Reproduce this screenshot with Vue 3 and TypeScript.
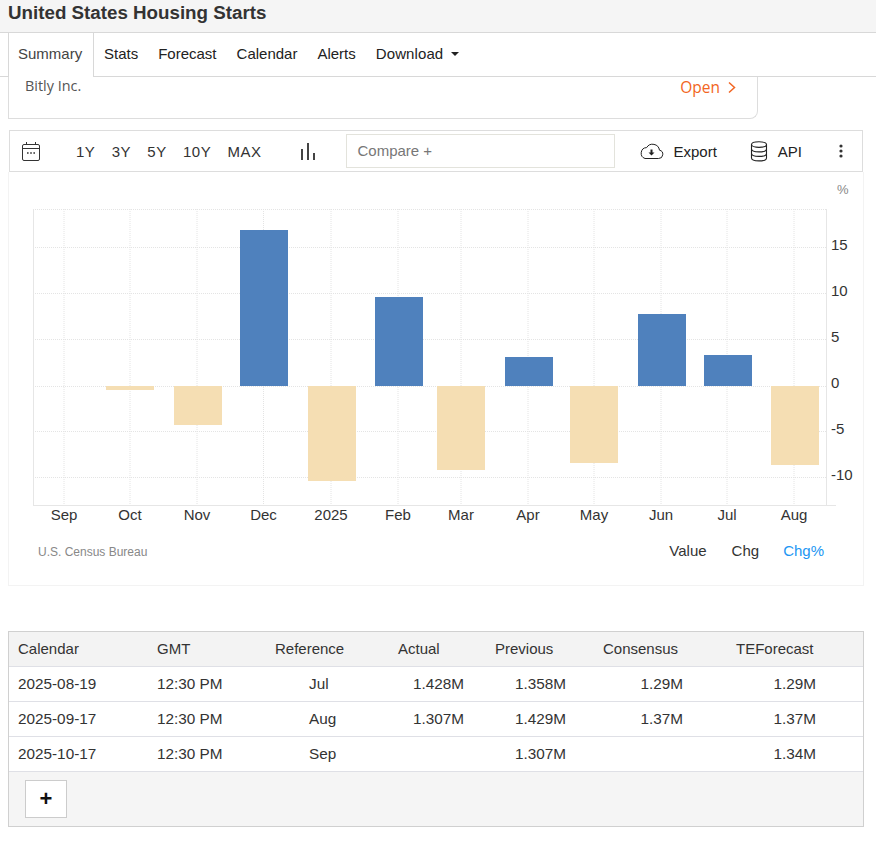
<script setup lang="ts">
const ranges = ['1Y', '3Y', '5Y', '10Y', 'MAX']
const tabs = ['Stats', 'Forecast', 'Calendar', 'Alerts']
const months = [
  { t: 'Sep', x: 64 }, { t: 'Oct', x: 130 }, { t: 'Nov', x: 197 }, { t: 'Dec', x: 263.5 },
  { t: '2025', x: 331 }, { t: 'Feb', x: 398 }, { t: 'Mar', x: 461 }, { t: 'Apr', x: 528 },
  { t: 'May', x: 594 }, { t: 'Jun', x: 661 }, { t: 'Jul', x: 727 }, { t: 'Aug', x: 794 },
]
const hLines = [209, 247, 293, 339, 431, 477]
const yLabels = [
  { t: '15', y: 250 }, { t: '10', y: 296 }, { t: '5', y: 342 },
  { t: '0', y: 388 }, { t: '-5', y: 434 }, { t: '-10', y: 480 },
]
const bars = [
  { x: 106, y: 386, h: 4, up: false }, { x: 174, y: 386, h: 39, up: false },
  { x: 240, y: 230, h: 156, up: true }, { x: 308, y: 386, h: 95, up: false },
  { x: 375, y: 297, h: 89, up: true }, { x: 437, y: 386, h: 84, up: false },
  { x: 505, y: 357, h: 29, up: true }, { x: 570, y: 386, h: 77, up: false },
  { x: 638, y: 314, h: 72, up: true }, { x: 704, y: 355, h: 31, up: true },
  { x: 771, y: 386, h: 79, up: false },
]
const rows = [
  ['2025-08-19', '12:30 PM', 'Jul', '1.428M', '1.358M', '1.29M', '1.29M'],
  ['2025-09-17', '12:30 PM', 'Aug', '1.307M', '1.429M', '1.37M', '1.37M'],
  ['2025-10-17', '12:30 PM', 'Sep', '', '1.307M', '', '1.34M'],
]
const heads = ['Calendar', 'GMT', 'Reference', 'Actual', 'Previous', 'Consensus', 'TEForecast']
</script>

<template>
  <div class="page">
    <header class="title"><h1>United States Housing Starts</h1></header>

    <nav class="tabs">
      <a class="tab active">Summary</a>
      <a v-for="t in tabs" :key="t" class="tab">{{ t }}</a>
      <a class="tab download">Download <span class="caret"></span></a>
    </nav>

    <div class="ad">
      <span class="ad-name">Bitly Inc.</span>
      <span class="ad-open">Open
        <svg width="10" height="13" viewBox="0 0 10 13"><path d="M2 1.5 L7.5 6.5 L2 11.5" fill="none" stroke="#f26522" stroke-width="1.5"/></svg>
      </span>
    </div>

    <div class="toolbar">
      <svg class="cal" width="20" height="21" viewBox="0 0 20 21" fill="none" stroke="#333" stroke-width="1">
        <rect x="1.5" y="3.5" width="17" height="16" rx="1.5"/>
        <path d="M1.5 7.5 H18.5 M5.5 1 V3.5 M14.5 1 V3.5"/>
        <path d="M6 12 H7.6 M9.2 12 H10.8 M12.4 12 H14" stroke-width="1.4"/>
      </svg>
      <div class="ranges">
        <span v-for="r in ranges" :key="r">{{ r }}</span>
      </div>
      <svg class="barsicon" width="16" height="18" viewBox="0 0 16 18" fill="#444">
        <rect x="1" y="7" width="2" height="11"/>
        <rect x="7" y="1" width="2" height="17"/>
        <rect x="13" y="11" width="2" height="7"/>
      </svg>
      <div class="compare">Compare +</div>
      <div class="action export">
        <svg width="25" height="18" viewBox="0 0 25 18" fill="none" stroke="#222" stroke-width="1">
          <path d="M6 16.5 H19.5 A4.2 4.2 0 0 0 20.5 8.2 A7 7 0 0 0 7.6 5.6 A5.6 5.6 0 0 0 6 16.5 Z"/>
          <path d="M12.5 7.5 V11" stroke-width="2"/>
          <path d="M9.5 10.5 H15.5 L12.5 13.5 Z" fill="#222" stroke="none"/>
        </svg>
        <span>Export</span>
      </div>
      <div class="action api">
        <svg width="18" height="21" viewBox="0 0 18 21" fill="none" stroke="#222" stroke-width="1.1">
          <ellipse cx="9" cy="3.6" rx="7.5" ry="2.8"/>
          <path d="M1.5 3.6 V17 C1.5 18.7 5 19.9 9 19.9 C13 19.9 16.5 18.7 16.5 17 V3.6"/>
          <path d="M1.5 8 C1.5 9.7 5 10.9 9 10.9 C13 10.9 16.5 9.7 16.5 8"/>
          <path d="M1.5 12.5 C1.5 14.2 5 15.4 9 15.4 C13 15.4 16.5 14.2 16.5 12.5"/>
        </svg>
        <span>API</span>
      </div>
      <svg class="dots" width="4" height="14" viewBox="0 0 4 14" fill="#333">
        <circle cx="2" cy="2" r="1.6"/><circle cx="2" cy="7" r="1.6"/><circle cx="2" cy="12" r="1.6"/>
      </svg>
    </div>

    <section class="panel">
      <svg class="chart" width="854" height="360" viewBox="9 172 854 360">
        <g stroke="#e4e4e4" stroke-dasharray="1 1">
          <line v-for="y in hLines" :key="y" x1="33" x2="826" :y1="y + 0.5" :y2="y + 0.5"/>
          <line v-for="m in months" :key="m.t" :x1="m.x" :x2="m.x" y1="209" y2="505"/>
        </g>
        <line x1="33" x2="826" y1="386.5" y2="386.5" stroke="#e4e4e4" stroke-dasharray="1 1"/>
        <line x1="33.5" x2="33.5" y1="209" y2="505" stroke="#e6e6e6"/>
        <line x1="826.5" x2="826.5" y1="209" y2="505" stroke="#e6e6e6"/>
        <line x1="33" x2="836" y1="505.5" y2="505.5" stroke="#e6e6e6"/>
        <rect v-for="b in bars" :key="b.x" :x="b.x" :y="b.y" width="48" :height="b.h" :fill="b.up ? '#4f81bd' : '#f5deb3'"/>
        <text x="837" y="194" class="pct">%</text>
        <text v-for="l in yLabels" :key="l.t" x="831" :y="l.y" class="ylab">{{ l.t }}</text>
        <text v-for="m in months" :key="m.t" :x="m.x" y="520" text-anchor="middle" class="xlab">{{ m.t }}</text>
      </svg>
      <div class="legend">
        <span class="source">U.S. Census Bureau</span>
        <span class="toggle val">Value</span>
        <span class="toggle chg">Chg</span>
        <span class="toggle on">Chg%</span>
      </div>
    </section>

    <section class="cal-table">
      <table>
        <colgroup>
          <col style="width:139px"/><col style="width:118px"/><col style="width:123px"/><col style="width:97px"/>
          <col style="width:108px"/><col style="width:133px"/><col/>
        </colgroup>
        <thead>
          <tr><th v-for="h in heads" :key="h">{{ h }}</th></tr>
        </thead>
        <tbody>
          <tr v-for="r in rows" :key="r[0]">
            <td v-for="(c, i) in r" :key="i">{{ c }}</td>
          </tr>
        </tbody>
      </table>
      <div class="more"><button class="plus">+</button></div>
    </section>
  </div>
</template>

<style>
html, body { margin: 0; background: #fff; }
</style>

<style scoped>
.page {
  width: 876px;
  height: 852px;
  overflow: hidden;
  font-family: "Liberation Sans", Arial, sans-serif;
  color: #333;
}
.title {
  height: 32px;
  background: #f5f5f5;
  border-bottom: 1px solid #d8d8d8;
  padding-left: 8px;
}
.title h1 {
  margin: 0;
  font-size: 18.75px;
  line-height: 25px;
  font-weight: 700;
  color: #333;
}
.tabs {
  display: flex;
  height: 43px;
  border-bottom: 1px solid #d8d8d8;
  padding-left: 8px;
  font-size: 15px;
  color: #222;
}
.tab {
  padding: 0 10px;
  line-height: 41px;
}
.tab.active {
  height: 44px;
  box-sizing: border-box;
  width: 86px;
  background: #fff;
  border-left: 1px solid #d8d8d8;
  border-right: 1px solid #d8d8d8;
  padding: 0 9px;
  color: #444;
}
.download { letter-spacing: 0.1px; }
.caret {
  display: inline-block;
  width: 0;
  height: 0;
  margin-left: 3px;
  vertical-align: 3px;
  border-left: 4px solid transparent;
  border-right: 4px solid transparent;
  border-top: 4px solid #222;
}
.ad {
  box-sizing: border-box;
  width: 750px;
  height: 42px;
  margin-left: 8px;
  border: 1px solid #ddd;
  border-top: none;
  border-bottom-right-radius: 8px;
  display: flex;
  justify-content: space-between;
  padding: 0 20px 0 16px;
  font-family: "Open Sans", sans-serif;
  font-size: 14.4px;
}
.ad-name { color: #555; line-height: 18px; }
.ad-open {
  color: #f26522;
  font-size: 15.5px;
  font-weight: 500;
  line-height: 20px;
  display: flex;
  align-items: center;
  gap: 7px;
  height: 20px;
}
.toolbar {
  box-sizing: border-box;
  width: 854px;
  height: 42px;
  margin: 11px 0 0 9px;
  border: 1px solid #ddd;
  display: flex;
  align-items: center;
  font-size: 15px;
  color: #222;
}
.cal { margin-left: 11px; flex: none; }
.ranges {
  display: flex;
  gap: 16.3px;
  margin-left: 35px;
  letter-spacing: 0.5px;
  color: #333;
}
.barsicon { margin-left: 39px; flex: none; }
.compare {
  box-sizing: border-box;
  width: 269px;
  height: 34px;
  margin-left: 30px;
  padding-left: 10px;
  border: 1px solid #e3e3dc;
  line-height: 31px;
  color: #777;
}
.action { display: flex; align-items: center; }
.export { margin-left: 24px; gap: 9px; }
.api { margin-left: 33px; gap: 10px; }
.dots { margin-left: 37px; flex: none; }
.panel {
  box-sizing: border-box;
  width: 856px;
  height: 414px;
  margin-left: 8px;
  border: 1px solid #f3f3f3;
  border-top: none;
}
.chart { display: block; }
.pct { font-size: 13px; fill: #888; }
.ylab { font-size: 15px; fill: #333; }
.xlab { font-size: 15px; fill: #333; }
.legend {
  display: flex;
  align-items: baseline;
  padding-top: 10px;
  font-size: 15px;
}
.source { font-size: 12px; color: #888; margin-left: 29px; }
.toggle { color: #333; }
.val { margin-left: auto; }
.chg { margin-left: 25px; }
.on { margin-left: 24px; margin-right: 39px; color: #2196f3; }
.cal-table {
  box-sizing: border-box;
  width: 856px;
  height: 196px;
  margin: 45px 0 0 8px;
  border: 1px solid #d0d0d0;
  background: #f5f5f5;
  font-size: 15px;
  color: #333;
}
table {
  width: 854px;
  table-layout: fixed;
  border-collapse: collapse;
}
th {
  height: 34px;
  padding: 0 0 0 9px;
  background: #f3f3f3;
  font-weight: 400;
  text-align: left;
  border-bottom: 1px solid #dfe0e6;
  box-sizing: border-box;
}
tbody tr { height: 35px; background: #fff; }
td {
  padding: 0;
  font-size: 15.3px;
  border-bottom: 1px solid #dfe0e6;
  box-sizing: border-box;
}
td:nth-child(1), td:nth-child(2) { padding-left: 9px; }
td:nth-child(3) { padding-left: 43px; }
td:nth-child(n+4) { text-align: right; }
td:nth-child(4) { padding-right: 22px; }
td:nth-child(5) { padding-right: 28px; }
td:nth-child(6) { padding-right: 44px; }
td:nth-child(7) { padding-right: 47px; }
.more { padding: 8px 0 0 16px; }
.plus {
  display: block;
  box-sizing: border-box;
  width: 42px;
  height: 38px;
  padding: 0;
  background: #fff;
  border: 1px solid #ccc;
  font-family: "Liberation Sans", Arial, sans-serif;
  font-size: 22px;
  font-weight: 700;
  line-height: 34px;
  color: #111;
}
</style>
